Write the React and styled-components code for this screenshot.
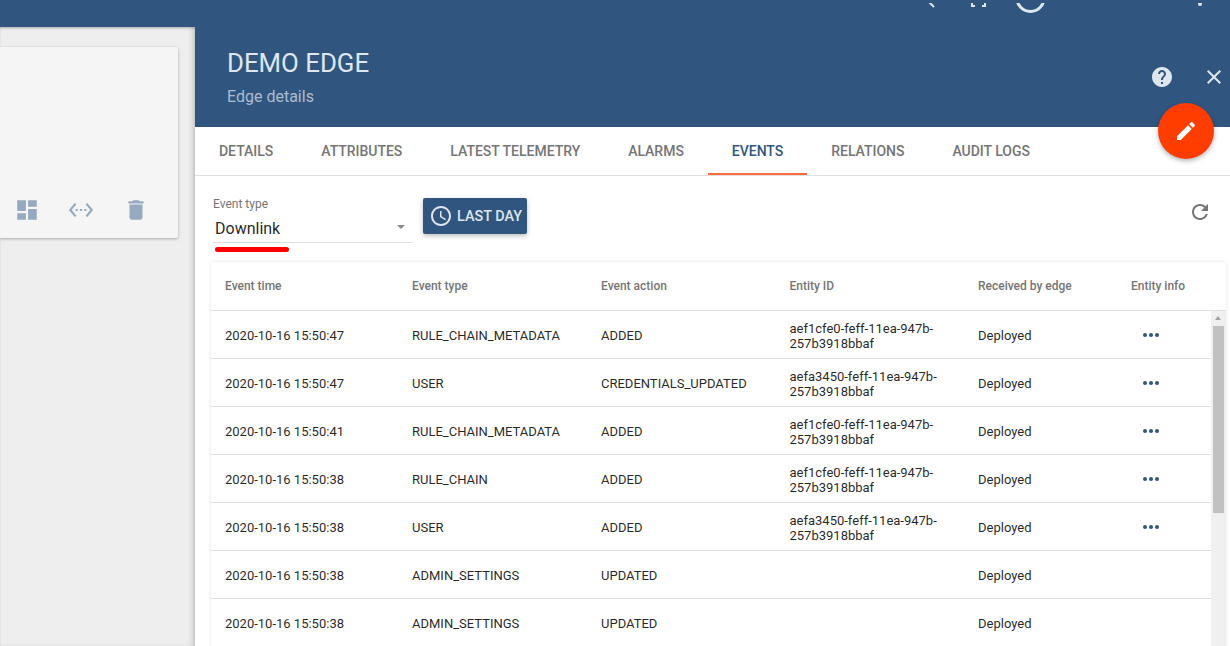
import React from 'react';
import styled, { createGlobalStyle } from 'styled-components';

const GlobalStyle = createGlobalStyle`
  html, body {
    margin: 0;
    padding: 0;
    height: 100%;
    overflow: hidden;
  }
  body {
    font-family: Roboto, "Liberation Sans", sans-serif;
    background: #eeeeee;
  }
`;

const Page = styled.div`
  position: relative;
  display: flex;
  width: 1230px;
  height: 646px;
  overflow: hidden;
  background: #305680;
`;

const TopIcons = styled.div`
  position: absolute;
  top: 0;
  left: 0;
  color: #dfe6ef;
`;

const LeftColumn = styled.div`
  width: 195px;
  flex: none;
  margin-top: 27px;
  padding-top: 20px;
  box-sizing: border-box;
  background: #eeeeee;
  box-shadow:
    inset 0 2px 3px -1px rgba(0, 0, 0, 0.25),
    inset -5px 0 6px -3px rgba(0, 0, 0, 0.18);
`;

const EdgeCard = styled.div`
  width: 178px;
  height: 191px;
  box-sizing: border-box;
  padding: 0 29.5px 15px 0;
  display: flex;
  justify-content: flex-end;
  align-items: flex-end;
  gap: 28.5px;
  background: #f5f5f5;
  border-radius: 0 2px 2px 0;
  box-shadow: 0 1px 3px rgba(0, 0, 0, 0.3);
`;

const CardIcon = styled.svg`
  width: 26px;
  height: 26px;
  fill: #95a9c0;
  display: block;
`;

const Drawer = styled.div`
  position: relative;
  flex: 1;
  display: flex;
  flex-direction: column;
  min-width: 0;
  background: #fff;
`;

const Header = styled.header`
  height: 127px;
  flex: none;
  box-sizing: border-box;
  padding: 47px 32px 0;
  background: #305680;
`;

const Title = styled.div`
  font-size: 25.8px;
  line-height: 32px;
  color: #dfe6ef;
`;

const Subtitle = styled.div`
  margin-top: 8px;
  font-size: 16px;
  line-height: 20px;
  color: #acbccf;
`;

const HeaderButtons = styled.div`
  position: absolute;
  top: 65px;
  right: 4px;
  display: flex;
  gap: 28px;
`;

const HeaderIcon = styled.svg`
  width: 24px;
  height: 24px;
  fill: #dfe6ef;
  display: block;
`;

const Fab = styled.button`
  position: absolute;
  top: 103px;
  right: 16px;
  width: 56px;
  height: 56px;
  padding: 16px;
  border: none;
  border-radius: 50%;
  background: #ff3d00;
  box-shadow: 0 2px 5px rgba(0, 0, 0, 0.3);
`;

const Tabs = styled.nav`
  display: flex;
  flex: none;
  height: 49px;
  box-sizing: border-box;
  border-bottom: 1px solid #e0e0e0;
`;

const Tab = styled.div`
  padding: 0 24px;
  font-size: 14px;
  font-weight: 500;
  letter-spacing: -0.02px;
  line-height: 48px;
  height: 48px;
  box-sizing: border-box;
  text-transform: uppercase;
  white-space: nowrap;
  color: ${({ $active }) => ($active ? '#305680' : '#757575')};
  border-bottom: 2px solid ${({ $active }) => ($active ? '#ff6a3c' : 'transparent')};
`;

const Filters = styled.div`
  display: flex;
  flex: none;
  height: 86px;
  box-sizing: border-box;
  padding: 22px 18px 0 18px;
`;

const SelectField = styled.div`
  position: relative;
  width: 199px;
  height: 45px;
  box-sizing: border-box;
  border-bottom: 1px solid #e0e0e0;
`;

const SelectLabel = styled.div`
  font-size: 12px;
  line-height: 12px;
  color: #757575;
`;

const SelectValue = styled.div`
  margin-top: 9px;
  padding-left: 2px;
  font-size: 16px;
  line-height: 20px;
  color: rgba(0, 0, 0, 0.87);
`;

const SelectArrow = styled.span`
  position: absolute;
  right: 7px;
  top: 27px;
  border-left: 4px solid transparent;
  border-right: 4px solid transparent;
  border-top: 4px solid #8a8a8a;
`;

const Underline = styled.span`
  position: absolute;
  left: 2px;
  top: 49px;
  width: 74px;
  height: 5px;
  border-radius: 3px;
  background: #ff0000;
`;

const TimeButton = styled.button`
  display: flex;
  align-items: center;
  gap: 4px;
  height: 36px;
  width: 104px;
  margin: 0 0 0 11px;
  padding: 0 0 0 6px;
  border: none;
  border-radius: 2px;
  background: #305680;
  color: #dfe6ef;
  font-family: inherit;
  font-size: 14.4px;
  font-weight: 500;
  white-space: nowrap;
  box-shadow: 0 2px 5px rgba(0, 0, 0, 0.26);
`;

const RefreshSlot = styled.div`
  margin-left: auto;
  margin-top: 2px;
`;

const RefreshIcon = styled.svg`
  width: 24px;
  height: 24px;
  fill: #757575;
  display: block;
`;

const TableCard = styled.div`
  position: relative;
  flex: 1;
  margin: 0 4px 0 16px;
  min-height: 0;
  overflow: hidden;
  background: #fff;
  box-shadow: 0 0 3px rgba(0, 0, 0, 0.12);
`;

const columns = '187px 189px 188.5px 188.5px 153px 1fr';

const HeadRow = styled.div`
  display: grid;
  grid-template-columns: ${columns};
  height: 49px;
  box-sizing: border-box;
  padding-left: 14px;
  align-items: center;
  border-bottom: 1px solid #e0e0e0;
  font-size: 12px;
  font-weight: 500;
  color: #757575;
`;

const ScrollArea = styled.div`
  display: flex;
`;

const Rows = styled.div`
  flex: 1;
  min-width: 0;
`;

const Row = styled.div`
  display: grid;
  grid-template-columns: ${columns};
  height: 48px;
  box-sizing: border-box;
  padding: 2px 0 0 14px;
  align-items: center;
  border-bottom: 1px solid #e0e0e0;
  font-size: 13px;
  color: rgba(0, 0, 0, 0.87);
`;

const EntityId = styled.div`
  width: 160px;
  line-height: 15px;
`;

const Dots = styled.div`
  display: flex;
  gap: 2px;
  margin-top: -2px;
  padding-left: 12px;
`;

const Dot = styled.span`
  width: 4px;
  height: 4px;
  border-radius: 50%;
  background: #305680;
`;

const Scrollbar = styled.div`
  position: relative;
  width: 15px;
  flex: none;
  background: #f0f0f0;
`;

const ScrollThumb = styled.div`
  position: absolute;
  top: 15px;
  left: 2px;
  width: 11px;
  height: 187px;
  background: #c1c1c1;
`;

const ScrollUp = styled.span`
  position: absolute;
  top: 5px;
  left: 4px;
  border-left: 3px solid transparent;
  border-right: 3px solid transparent;
  border-bottom: 4px solid #a0a0a0;
`;

const tabs = ['Details', 'Attributes', 'Latest telemetry', 'Alarms', 'Events', 'Relations', 'Audit logs'];

const events = [
  ['2020-10-16 15:50:47', 'RULE_CHAIN_METADATA', 'ADDED', 'aef1cfe0-feff-11ea-947b-257b3918bbaf'],
  ['2020-10-16 15:50:47', 'USER', 'CREDENTIALS_UPDATED', 'aefa3450-feff-11ea-947b-257b3918bbaf'],
  ['2020-10-16 15:50:41', 'RULE_CHAIN_METADATA', 'ADDED', 'aef1cfe0-feff-11ea-947b-257b3918bbaf'],
  ['2020-10-16 15:50:38', 'RULE_CHAIN', 'ADDED', 'aef1cfe0-feff-11ea-947b-257b3918bbaf'],
  ['2020-10-16 15:50:38', 'USER', 'ADDED', 'aefa3450-feff-11ea-947b-257b3918bbaf'],
  ['2020-10-16 15:50:38', 'ADMIN_SETTINGS', 'UPDATED', ''],
  ['2020-10-16 15:50:38', 'ADMIN_SETTINGS', 'UPDATED', ''],
];

const App = () => (
  <Page>
    <GlobalStyle />
    <LeftColumn>
      <EdgeCard>
        <CardIcon viewBox="0 0 24 24"><path d="M3 13h8V3H3v10zm0 8h8v-6H3v6zm10 0h8V11h-8v10zm0-18v6h8V3h-8z" /></CardIcon>
        <CardIcon viewBox="0 0 24 24"><path d="M7.77 6.76 6.23 5.48.82 12l5.41 6.52 1.54-1.28L3.42 12l4.35-5.24zM7 13h2v-2H7v2zm10-2h-2v2h2v-2zm-6 2h2v-2h-2v2zm6.77-7.52-1.54 1.28L20.58 12l-4.35 5.24 1.54 1.28L23.18 12l-5.41-6.52z" /></CardIcon>
        <CardIcon viewBox="0 0 24 24"><path d="M6 19c0 1.1.9 2 2 2h8c1.1 0 2-.9 2-2V7H6v12zM19 4h-3.5l-1-1h-5l-1 1H5v2h14V4z" /></CardIcon>
      </EdgeCard>
    </LeftColumn>
    <Drawer>
      <Header>
        <Title>DEMO EDGE</Title>
        <Subtitle>Edge details</Subtitle>
      </Header>
      <HeaderButtons>
        <HeaderIcon viewBox="0 0 24 24"><path d="M12 2C6.48 2 2 6.48 2 12s4.48 10 10 10 10-4.48 10-10S17.52 2 12 2zm1 17h-2v-2h2v2zm2.07-7.75-.9.92C13.45 12.9 13 13.5 13 15h-2v-.5c0-1.1.45-2.1 1.17-2.83l1.24-1.26c.37-.36.59-.86.59-1.41 0-1.1-.9-2-2-2s-2 .9-2 2H8c0-2.21 1.79-4 4-4s4 1.79 4 4c0 .88-.36 1.68-.93 2.25z" /></HeaderIcon>
        <HeaderIcon viewBox="0 0 24 24"><path d="M19 6.41 17.59 5 12 10.59 6.41 5 5 6.41 10.59 12 5 17.59 6.41 19 12 13.41 17.59 19 19 17.59 13.41 12z" /></HeaderIcon>
      </HeaderButtons>
      <Fab>
        <svg viewBox="0 0 24 24" width="24" height="24" fill="#fff" style={{ display: 'block' }}>
          <path d="M3 17.25V21h3.75L17.81 9.94l-3.75-3.75L3 17.25zM20.71 7.04a1 1 0 0 0 0-1.41l-2.34-2.34a1 1 0 0 0-1.41 0l-1.83 1.83 3.75 3.75 1.83-1.83z" />
        </svg>
      </Fab>
      <Tabs>
        {tabs.map((t) => <Tab key={t} $active={t === 'Events'}>{t}</Tab>)}
      </Tabs>
      <Filters>
        <SelectField>
          <SelectLabel>Event type</SelectLabel>
          <SelectValue>Downlink</SelectValue>
          <SelectArrow />
          <Underline />
        </SelectField>
        <TimeButton>
          <svg viewBox="0 0 24 24" width="24" height="24" fill="#dfe6ef">
            <path d="M11.99 2C6.47 2 2 6.48 2 12s4.47 10 9.99 10C17.52 22 22 17.52 22 12S17.52 2 11.99 2zM12 20c-4.42 0-8-3.58-8-8s3.58-8 8-8 8 3.58 8 8-3.58 8-8 8zm.5-13H11v6l5.25 3.15.75-1.23-4.5-2.67z" />
          </svg>
          LAST DAY
        </TimeButton>
        <RefreshSlot>
          <RefreshIcon viewBox="0 0 24 24"><path d="M17.65 6.35A7.96 7.96 0 0 0 12 4C7.58 4 4.01 7.58 4.01 12S7.58 20 12 20c3.73 0 6.84-2.55 7.73-6h-2.08A5.99 5.99 0 0 1 12 18c-3.31 0-6-2.69-6-6s2.69-6 6-6c1.66 0 3.14.69 4.22 1.78L13 11h7V4l-2.35 2.35z" /></RefreshIcon>
        </RefreshSlot>
      </Filters>
      <TableCard>
        <HeadRow>
          <div>Event time</div>
          <div>Event type</div>
          <div>Event action</div>
          <div>Entity ID</div>
          <div>Received by edge</div>
          <div>Entity info</div>
        </HeadRow>
        <ScrollArea>
          <Rows>
            {events.map(([time, type, action, id], i) => (
              <Row key={i}>
                <div>{time}</div>
                <div>{type}</div>
                <div>{action}</div>
                <EntityId>{id}</EntityId>
                <div>Deployed</div>
                {id ? <Dots><Dot /><Dot /><Dot /></Dots> : <div />}
              </Row>
            ))}
          </Rows>
          <Scrollbar>
            <ScrollUp />
            <ScrollThumb />
          </Scrollbar>
        </ScrollArea>
      </TableCard>
    </Drawer>
    <TopIcons>
      <svg width="1230" height="12" viewBox="0 0 1230 12" fill="none" stroke="#dfe6ef" strokeWidth="2">
        <path d="M929 -1l5 5" />
        <path d="M972 0v3h3M982 3h3V0" />
        <circle cx="1030.5" cy="-5" r="13.5" strokeWidth="3" />
        <circle cx="1200" cy="1" r="2" fill="#dfe6ef" stroke="none" />
      </svg>
    </TopIcons>
  </Page>
);

export default App;
